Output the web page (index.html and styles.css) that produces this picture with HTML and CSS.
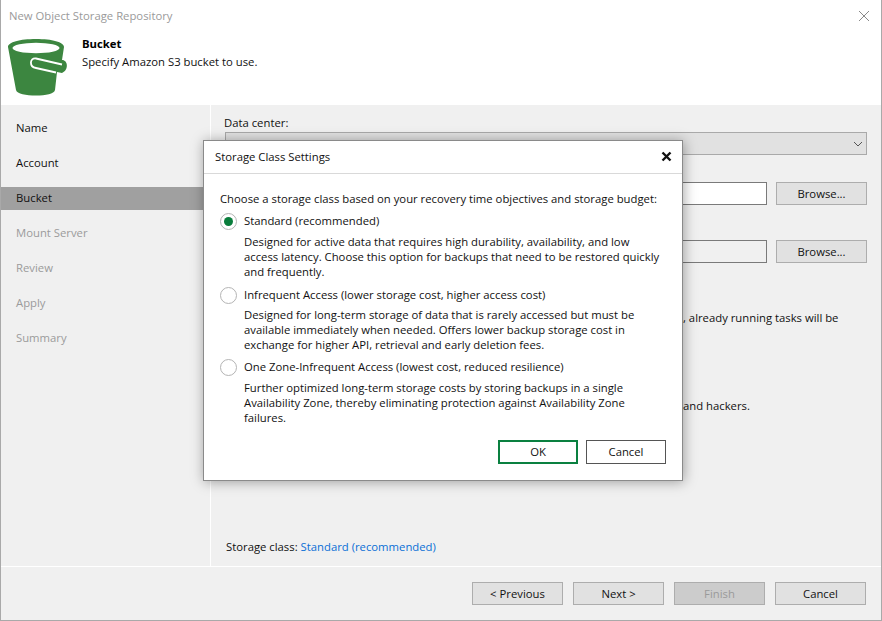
FILE: index.html
```html
<!DOCTYPE html>
<html lang="en">
<head>
    <meta charset="UTF-8">
    <title>New Object Storage Repository</title>
    <link rel="stylesheet" href="styles.css">
</head>
<body>
    <div class="window">
        <div class="titlebar">
            <span class="window-title">New Object Storage Repository</span>
            <svg class="window-close" width="10" height="10" viewBox="0 0 10 10"><path d="M0 0L10 10M10 0L0 10" stroke="#8a8a8a" stroke-width="1" fill="none"/></svg>
        </div>

        <div class="header">
            <svg class="bucket-icon" width="62" height="58" viewBox="0 0 62 58">
                <path d="M0 8C0 3 12 0 28 0S56 3 56 8L54 21C60 21 61 31 54 34L49 33L47 51C46 55 38 56.500 28 56.500S9 55 8 51Z" fill="#3c8640"/>
                <ellipse cx="28" cy="9" rx="23.500" ry="5.200" fill="#fff"/>
                <path d="M54 25.500L28 19.500C21.500 18.500 21 28 28 29L48 33.500" fill="none" stroke="#fff" stroke-width="1.800"/>
            </svg>
            <div class="header-text">
                <div class="header-title">Bucket</div>
                <div class="header-sub">Specify Amazon S3 bucket to use.</div>
            </div>
        </div>

        <div class="body-row">
            <nav class="steps">
                <a class="step">Name</a>
                <a class="step">Account</a>
                <a class="step active">Bucket</a>
                <a class="step off">Mount Server</a>
                <a class="step off">Review</a>
                <a class="step off">Apply</a>
                <a class="step off">Summary</a>
            </nav>

            <div class="panel">
                <label class="field-label">Data center:</label>
                <div class="combo">
                    <span class="combo-text">EU (Frankfurt)</span>
                    <svg width="10" height="6" viewBox="0 0 10 6"><path d="M1 1L5 5L9 1" stroke="#555" fill="none"/></svg>
                </div>
                <div class="browse-row first">
                    <div class="textbox"></div>
                    <button class="btn">Browse...</button>
                </div>
                <div class="browse-row second">
                    <div class="textbox"></div>
                    <button class="btn">Browse...</button>
                </div>
                <p class="note note-tasks">, already running tasks will be</p>
                <p class="note note-hackers">and hackers.</p>
                <div class="storage-class">Storage class: <a class="link">Standard (recommended)</a></div>
            </div>
        </div>

        <div class="footer">
            <button class="btn">&lt; Previous</button>
            <button class="btn">Next &gt;</button>
            <button class="btn disabled">Finish</button>
            <button class="btn">Cancel</button>
        </div>
    </div>

    <div class="dialog">
        <div class="dialog-head">
            <span>Storage Class Settings</span>
            <svg width="11" height="11" viewBox="0 0 11 11"><path d="M1.500 1.500L9.500 9.500M9.500 1.500L1.500 9.500" stroke="#111" stroke-width="2.400" fill="none"/></svg>
        </div>
        <div class="dialog-body">
            <p class="intro">Choose a storage class based on your recovery time objectives and storage budget:</p>

            <div class="option">
                <span class="radio checked"></span>
                <div class="option-title">Standard (recommended)</div>
                <p class="option-desc">Designed for active data that requires high durability, availability, and low<br>access latency. Choose this option for backups that need to be restored quickly<br>and frequently.</p>
            </div>
            <div class="option tight">
                <span class="radio"></span>
                <div class="option-title">Infrequent Access (lower storage cost, higher access cost)</div>
                <p class="option-desc">Designed for long-term storage of data that is rarely accessed but must be<br>available immediately when needed. Offers lower backup storage cost in<br>exchange for higher API, retrieval and early deletion fees.</p>
            </div>
            <div class="option last">
                <span class="radio"></span>
                <div class="option-title">One Zone-Infrequent Access (lowest cost, reduced resilience)</div>
                <p class="option-desc">Further optimized long-term storage costs by storing backups in a single<br>Availability Zone, thereby eliminating protection against Availability Zone<br>failures.</p>
            </div>

            <div class="dialog-buttons">
                <button class="dlg-btn default">OK</button>
                <button class="dlg-btn">Cancel</button>
            </div>
        </div>
    </div>
</body>
</html>
```

FILE: styles.css
```css
* {
    box-sizing: border-box;
}

body {
    margin: 0;
    font-family: "Open Sans", "Noto Sans", sans-serif;
    font-size: 11.3px;
    color: #111;
    background: #fff;
}

p {
    margin: 0;
}

.window {
    width: 882px;
    height: 621px;
    display: flex;
    flex-direction: column;
    border: 1px solid #a9a9a9;
    border-top: 0;
    background: #fff;
}

/* title and header */
.titlebar {
    height: 31px;
    flex: none;
    display: flex;
    align-items: center;
    justify-content: space-between;
    padding: 0 12px 0 8px;
    color: #9a9a9a;
}

.header {
    height: 74px;
    flex: none;
    display: flex;
    padding-left: 7px;
}

.bucket-icon {
    margin-top: 8px;
}

.header-text {
    margin-left: 12px;
    padding-top: 4px;
}

.header-title {
    font-weight: 700;
    line-height: 18px;
    color: #000;
}

.header-sub {
    line-height: 18px;
}

/* body */
.body-row {
    flex: 1;
    display: flex;
    background: #f0f0f0;
}

.steps {
    width: 210px;
    flex: none;
    padding-top: 12px;
    border-right: 1px solid #fff;
    display: flex;
    flex-direction: column;
    gap: 12px;
}

.step {
    height: 23px;
    line-height: 22px;
    padding-left: 15px;
}

.step.active {
    background: #a0a0a0;
}

.step.off {
    color: #9b9b9b;
}

.panel {
    flex: 1;
    padding: 10px 14px 0 14px;
    display: flex;
    flex-direction: column;
    width: 0;
}

.field-label {
    line-height: 16px;
    margin-left: -1px;
}

.combo {
    height: 23px;
    margin-top: 1px;
    border: 1px solid #a9a9a9;
    background: #e1e1e1;
    display: flex;
    align-items: center;
    justify-content: space-between;
    padding: 0 3px 0 4px;
}

.browse-row {
    display: flex;
    gap: 9px;
}

.browse-row.first {
    margin-top: 27px;
}

.browse-row.second {
    margin-top: 35px;
}

.textbox {
    flex: 1;
    height: 23px;
    background: #fff;
    border: 1px solid #7a7a7a;
}

.browse-row.second .textbox {
    background: #f0f0f0;
}

.browse-row .btn {
    width: 91px;
}

.btn {
    height: 23px;
    width: 91px;
    padding: 0 0 1px;
    font: inherit;
    color: #111;
    background: #e1e1e1;
    border: 1px solid #adadad;
}

.btn.disabled {
    background: #cccccc;
    color: #9a9a9a;
}

.note {
    line-height: 16px;
    margin-left: 458px;
}

.note-tasks {
    margin-top: 47px;
}

.note-hackers {
    margin-top: 72px;
}

.storage-class {
    margin-top: auto;
    margin-bottom: 11px;
    padding-left: 1px;
    line-height: 16px;
}

.link {
    color: #0a6fd6;
}

.footer {
    height: 54px;
    flex: none;
    border-top: 1px solid #fff;
    background: #f0f0f0;
    display: flex;
    justify-content: flex-end;
    gap: 10px;
    padding: 15px 15px 0 0;
}

/* dialog over the wizard */
.dialog {
    position: absolute;
    left: 203px;
    top: 140px;
    width: 480px;
    height: 341px;
    background: #fff;
    border: 1px solid #8a8a8a;
    box-shadow: 1px 1px 12px rgba(0, 0, 0, 0.35);
}

.dialog-head {
    height: 33px;
    display: flex;
    align-items: center;
    justify-content: space-between;
    padding: 0 10px 2px 11px;
    border-bottom: 1px solid #d9d9d9;
}

.dialog-body {
    padding: 17px 16px 0 16px;
}

.intro {
    line-height: 16px;
}

.option {
    position: relative;
    padding-left: 24px;
    margin-top: 6px;
}

.option.tight {
    margin-top: 8px;
}

.option.last {
    margin-top: 7px;
}

.radio {
    position: absolute;
    left: 0;
    top: 0;
    width: 17px;
    height: 17px;
    border: 1px solid #b4b4b4;
    border-radius: 50%;
    background: #fff;
}

.radio.checked::after {
    content: "";
    position: absolute;
    left: 3px;
    top: 3px;
    width: 9px;
    height: 9px;
    border-radius: 50%;
    background: #0a7d3c;
}

.option-title {
    line-height: 16px;
}

.option-desc {
    margin-top: 5px;
    line-height: 15px;
}

.option.tight .option-desc {
    margin-top: 4px;
}

.dialog-buttons {
    display: flex;
    justify-content: flex-end;
    gap: 8px;
    margin-top: 15px;
}

.dlg-btn {
    width: 80px;
    height: 24px;
    padding: 0 0 1px;
    font: inherit;
    color: #111;
    background: #fff;
    border: 1px solid #555;
}

.dlg-btn.default {
    border: 2px solid #0a8040;
}
```
